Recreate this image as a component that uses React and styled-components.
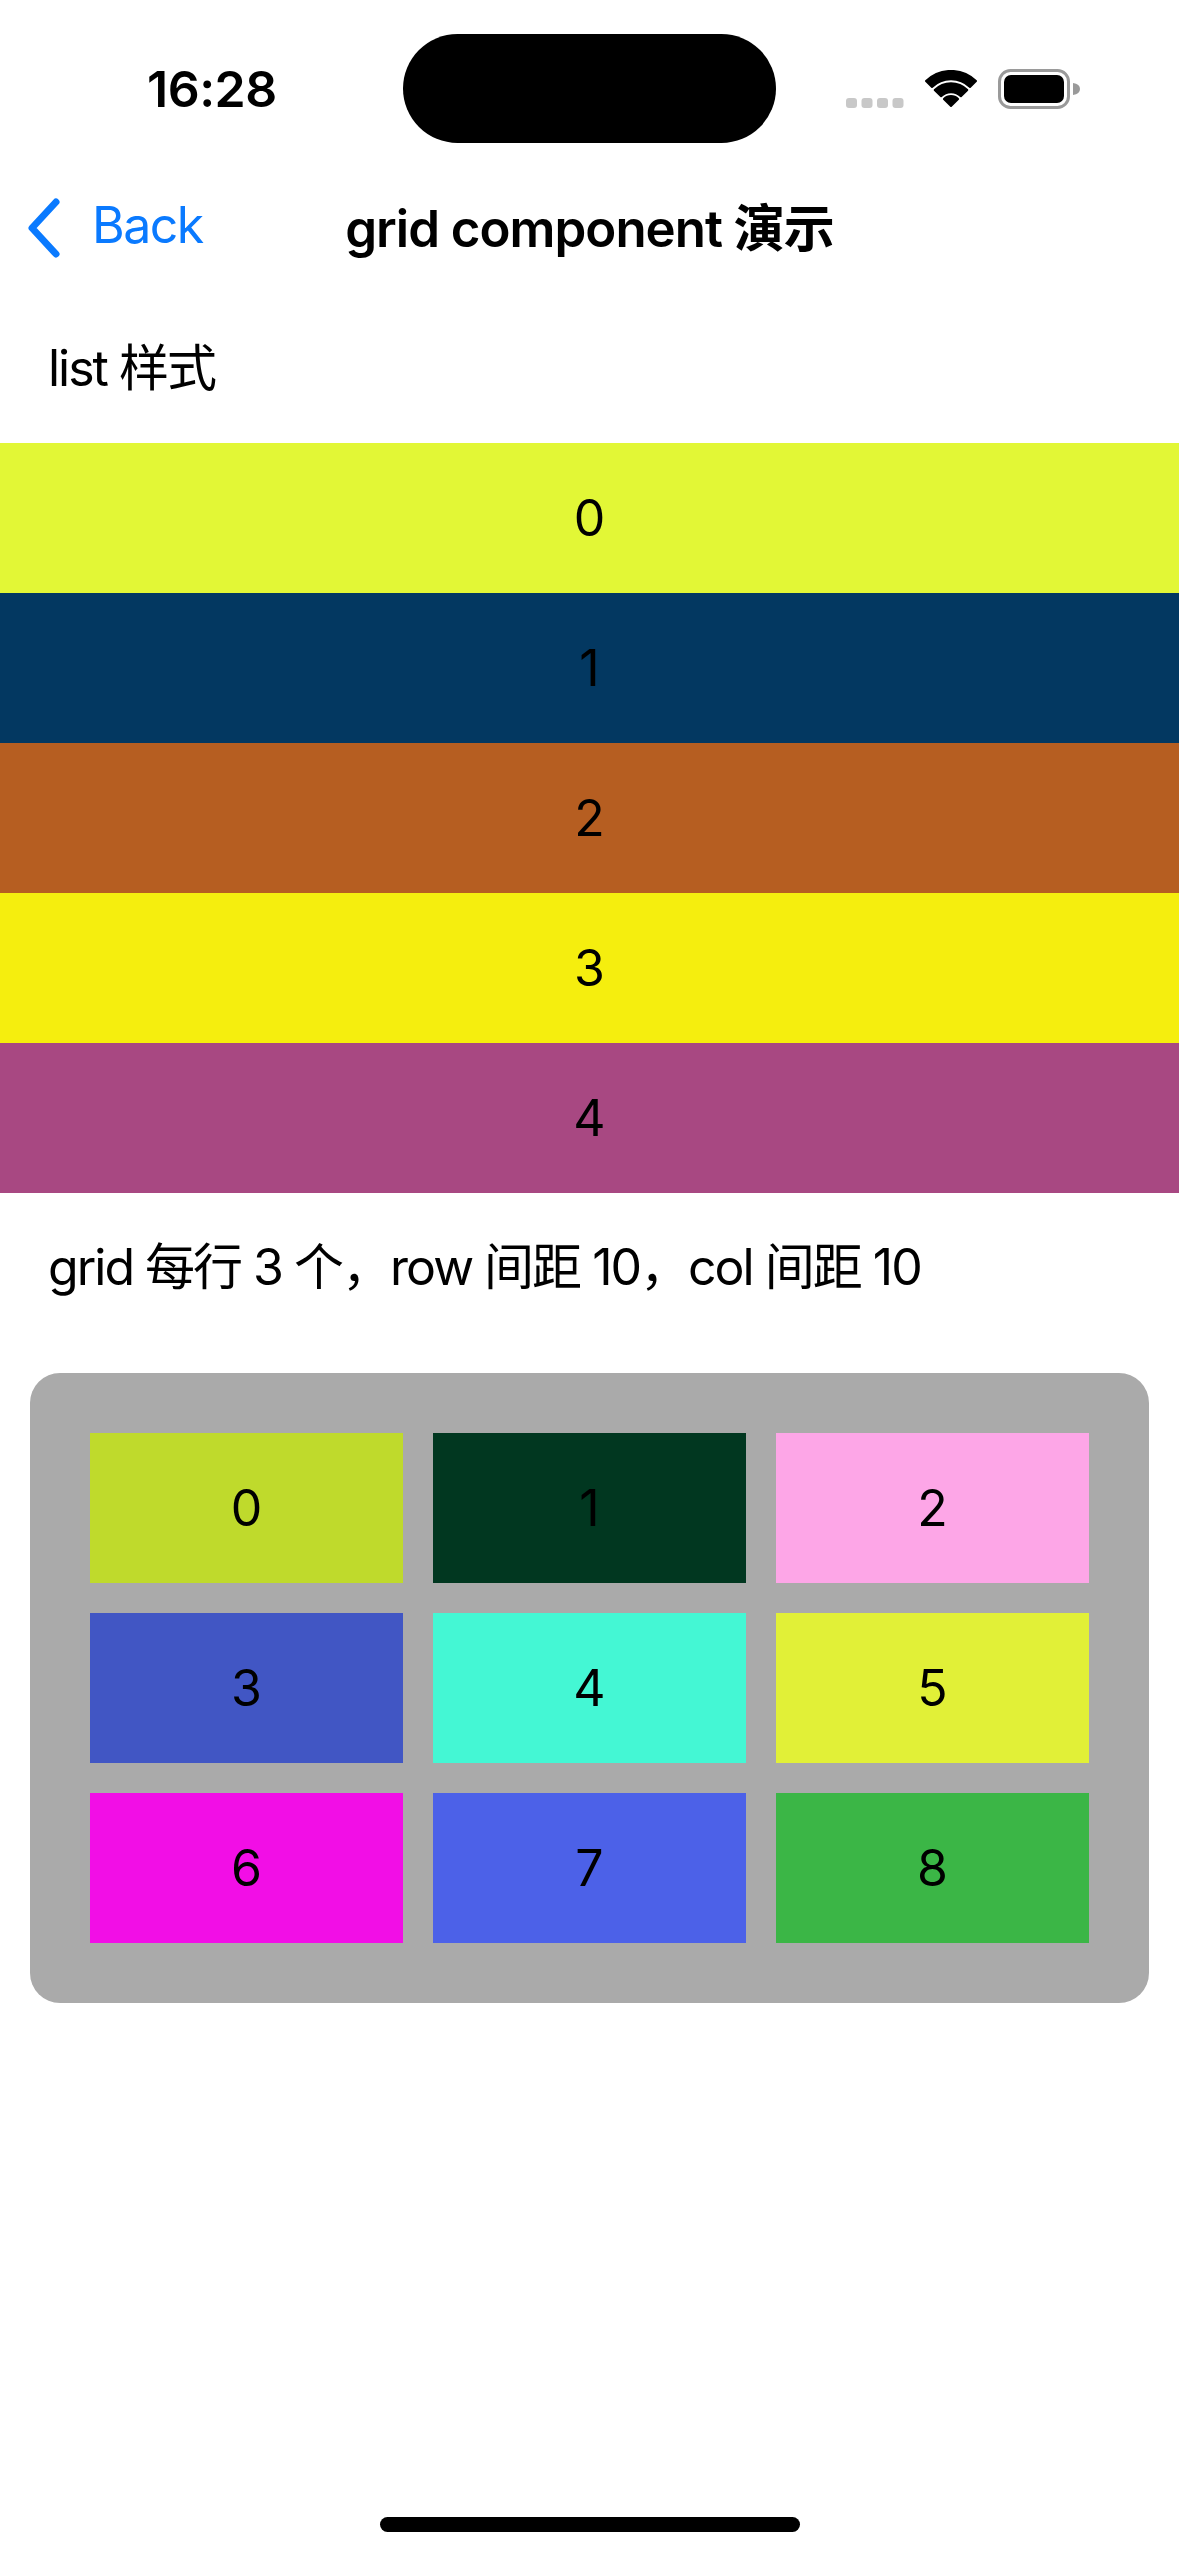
import React from 'react';
import styled, { createGlobalStyle } from 'styled-components';

const GlobalStyle = createGlobalStyle`
  html, body {
    margin: 0;
    padding: 0;
    background: #ffffff;
  }
  body {
    font-family: Inter, "Noto Sans CJK SC", sans-serif;
    color: #000000;
  }
`;

const listColors = ['#e2f736', '#033861', '#b65e21', '#f5ee0e', '#a84882'];
const gridColors = [
  '#bfda2c', '#013720', '#fda6e7',
  '#4156c4', '#44f7d4', '#e1f037',
  '#f20ee6', '#4c61e8', '#3bb646',
];

const Screen = styled.div`
  position: relative;
  width: 1179px;
  height: 2556px;
  background: #ffffff;
  overflow: hidden;
  display: flex;
  flex-direction: column;
`;

// status bar
const StatusBar = styled.div`
  height: 162px;
  box-sizing: border-box;
  padding-top: 34px;
  display: grid;
  grid-template-columns: 403px 373px 1fr;
  align-items: start;
`;

const Clock = styled.div`
  height: 109px;
  display: flex;
  align-items: center;
  padding-left: 147px;
  font-size: 50px;
  font-weight: 600;
  letter-spacing: -0.5px;
`;

const Island = styled.div`
  height: 109px;
  background: #000000;
  border-radius: 55px;
`;

const StatusIcons = styled.div`
  height: 109px;
  display: flex;
  align-items: center;
  gap: 21px;
  padding-left: 70px;
`;

// nav bar
const NavBar = styled.div`
  height: 132px;
  box-sizing: border-box;
  padding-bottom: 6px;
  display: grid;
  grid-template-columns: 1fr auto 1fr;
  align-items: center;
`;

const BackButton = styled.div`
  display: flex;
  align-items: center;
  gap: 30px;
  padding-left: 26px;
  color: #0a7aff;
  font-size: 50px;
  letter-spacing: -1.5px;
`;

const BackChevron = styled.svg`
  margin-top: 6px;
`;

const NavTitle = styled.div`
  font-size: 51px;
  font-weight: 600;
  letter-spacing: -1px;
`;

// content
const SectionLabel = styled.div`
  height: ${(p) => p.$h}px;
  box-sizing: border-box;
  display: flex;
  align-items: center;
  padding: 0 45px 10px 48px;
  font-size: 50px;
  letter-spacing: -2px;
`;

const ListRow = styled.div`
  height: 150px;
  display: flex;
  align-items: center;
  justify-content: center;
  background: ${(p) => p.$bg};
  font-size: 50px;
`;

const GridBox = styled.div`
  margin: 30px 30px 0;
  padding: 60px;
  background: #aaaaaa;
  border-radius: 30px;
  display: grid;
  grid-template-columns: repeat(3, 1fr);
  gap: 30px;
`;

const GridCell = styled.div`
  height: 150px;
  display: flex;
  align-items: center;
  justify-content: center;
  background: ${(p) => p.$bg};
  font-size: 50px;
`;

const HomeIndicator = styled.div`
  position: absolute;
  left: 380px;
  top: 2517px;
  width: 420px;
  height: 15px;
  border-radius: 8px;
  background: #000000;
`;

const SignalDots = () => (
  <svg width="58" height="40" viewBox="0 0 58 40">
    {[0, 1, 2, 3].map((i) => (
      <rect key={i} x={i * 15.5} y="29" width="11" height="10" rx="3" fill="#c8c8c8" />
    ))}
  </svg>
);

const Wifi = () => (
  <svg width="52" height="38" viewBox="0 0 52 38">
    <g fill="#000" stroke="#000" strokeWidth="2" strokeLinejoin="round">
      <path d="M1 11 A36 36 0 0 1 51 11 L45 17 A27 27 0 0 0 7 17 Z" />
      <path d="M9.7 20 A23 23 0 0 1 42.3 20 L35.9 26.3 A14 14 0 0 0 16.1 26.3 Z" />
      <path d="M18.9 29 A10 10 0 0 1 33.1 29 L26 36 Z" />
    </g>
  </svg>
);

const Battery = () => (
  <svg width="84" height="40" viewBox="0 0 84 40">
    <rect x="1.5" y="1.5" width="69" height="37" rx="11" fill="none" stroke="#9a9a9a" strokeWidth="3" />
    <rect x="6" y="6" width="60" height="28" rx="7" fill="#000" />
    <path d="M75 14 Q82 15 82 20 Q82 25 75 26 Z" fill="#9a9a9a" />
  </svg>
);

const Chevron = () => (
  <BackChevron width="36" height="60" viewBox="0 0 36 60">
    <path d="M30 4 L6 30 L30 56" fill="none" stroke="#0a7aff" strokeWidth="7" strokeLinecap="round" strokeLinejoin="round" />
  </BackChevron>
);

const App = () => {
  return (
    <>
      <GlobalStyle />
      <Screen>
        <StatusBar>
          <Clock>16:28</Clock>
          <Island />
          <StatusIcons>
            <SignalDots />
            <Wifi />
            <Battery />
          </StatusIcons>
        </StatusBar>

        <NavBar>
          <BackButton>
            <Chevron />
            <span>Back</span>
          </BackButton>
          <NavTitle>grid component 演示</NavTitle>
          <div />
        </NavBar>

        <SectionLabel $h={149}>list 样式</SectionLabel>
        {listColors.map((c, i) => (
          <ListRow key={i} $bg={c}>{i}</ListRow>
        ))}

        <SectionLabel $h={150}>grid 每行 3 个，row 间距 10，col 间距 10</SectionLabel>
        <GridBox>
          {gridColors.map((c, i) => (
            <GridCell key={i} $bg={c}>{i}</GridCell>
          ))}
        </GridBox>

        <HomeIndicator />
      </Screen>
    </>
  );
};

export default App;
